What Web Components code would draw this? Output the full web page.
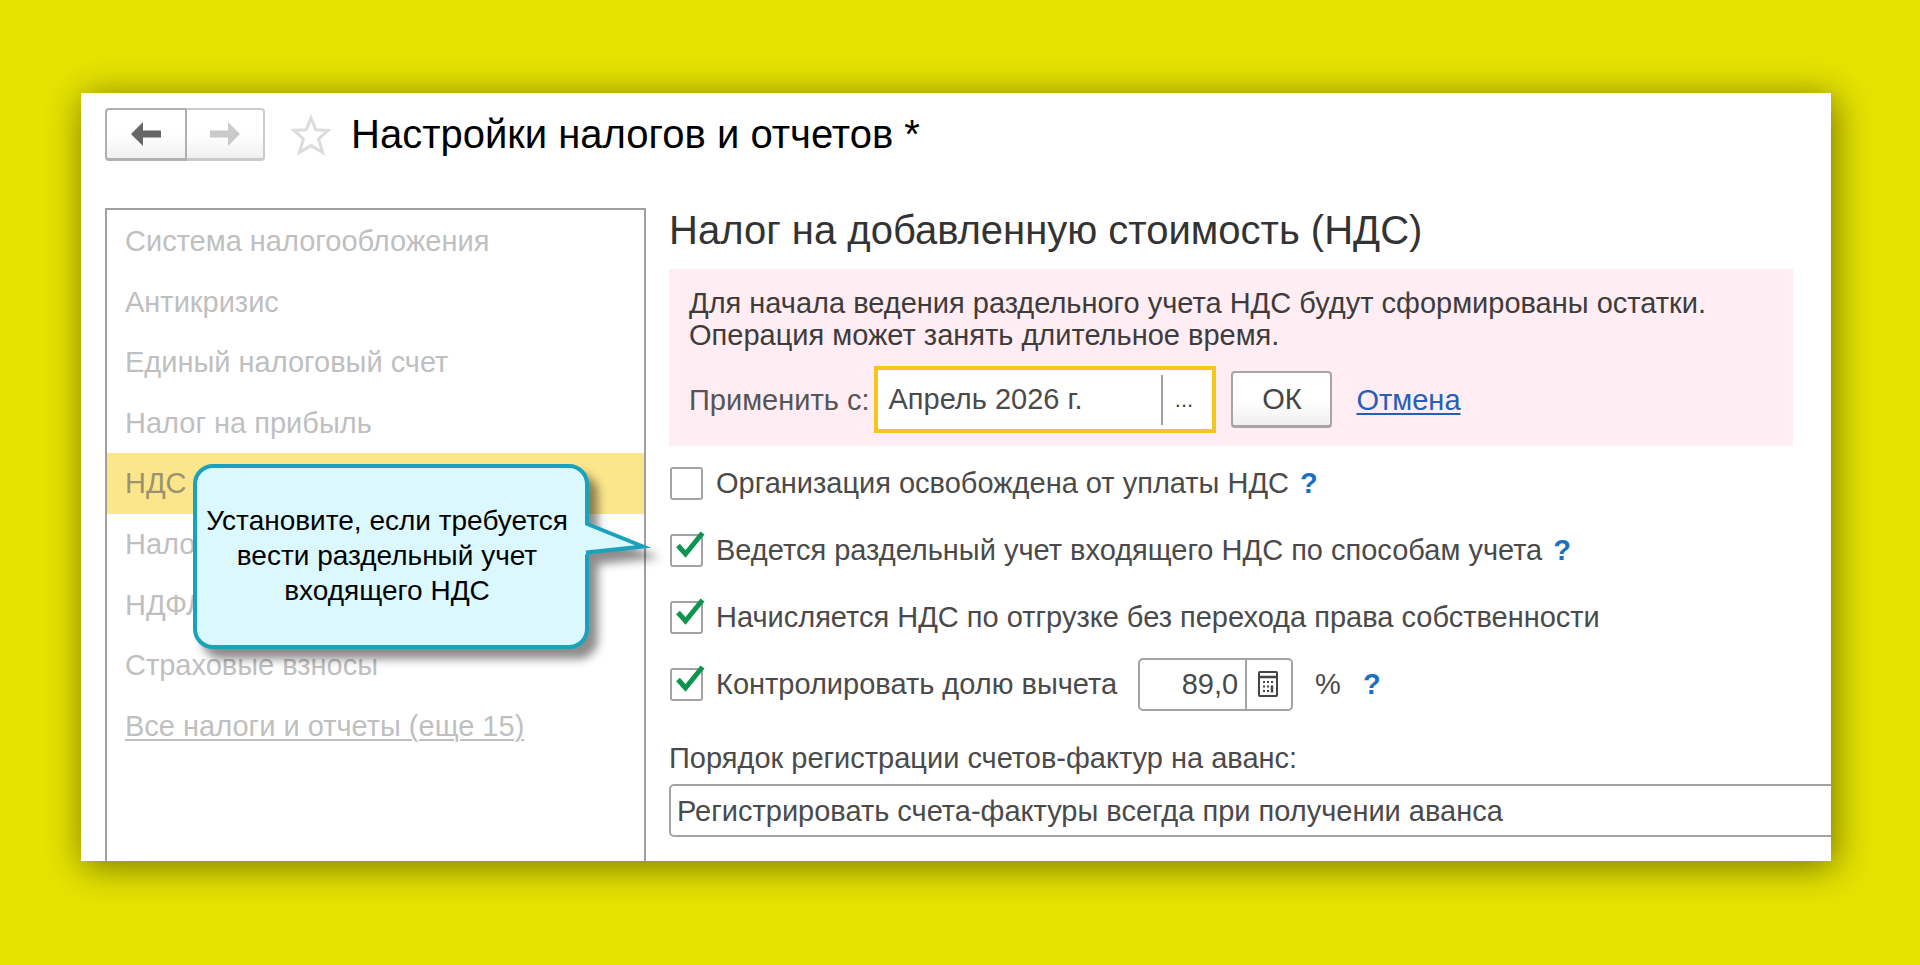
<!DOCTYPE html>
<html lang="ru">
<head>
<meta charset="utf-8">
<title>Настройки налогов и отчетов</title>
<style>
  body {
    margin: 0;
    min-height: 100vh;
    box-sizing: border-box;
    padding: 93px 89px 104px 81px;
    background: #e5e300;
    font-family: "Liberation Sans", Arial, sans-serif;
    font-size: 29px;
    line-height: 32px;
    color: #4a4a4a;
  }
</style>
</head>
<body>

<tax-window>
  <history-buttons slot="tools"></history-buttons>
  <favorite-star slot="tools"></favorite-star>
  <span slot="title">Настройки налогов и отчетов *</span>

  <section-list slot="sections">
    <section-item>Система налогообложения</section-item>
    <section-item>Антикризис</section-item>
    <section-item>Единый налоговый счет</section-item>
    <section-item>Налог на прибыль</section-item>
    <section-item selected>НДС</section-item>
    <section-item>Налог</section-item>
    <section-item>НДФЛ</section-item>
    <section-item>Страховые взносы</section-item>
    <section-item underlined>Все налоги и отчеты (еще 15)</section-item>
    <callout-note slot="note">Установите, если требуется<br>вести раздельный учет<br>входящего НДС</callout-note>
  </section-list>

  <vat-settings></vat-settings>
</tax-window>

<script>
class BaseElement extends HTMLElement {
  constructor() {
    super();
    this.attachShadow({ mode: "open" });
    this.shadowRoot.innerHTML = this.render();
  }

  render() {
    return "<slot></slot>";
  }
}

class TaxWindow extends BaseElement {
  render() {
    return `
      <style>
        :host {
          display: block;
          background: #fff;
          box-shadow: 3px 5px 34px 1px rgba(0, 0, 0, .48);
        }
        .frame { overflow: hidden; padding: 15px 0 24px 24px; }
        header { display: flex; align-items: center; margin-bottom: 47px; }
        h1 {
          margin: 0 0 2px 20px;
          font-size: 40px;
          line-height: 44px;
          font-weight: normal;
          color: #000;
        }
        .columns {
          display: grid;
          grid-template-columns: 541px 1fr;
          column-gap: 23px;
        }
        nav { margin-bottom: -24px; display: grid; }
        main { min-width: 0; }
      </style>
      <div class="frame">
        <header>
          <slot name="tools"></slot>
          <h1><slot name="title"></slot></h1>
        </header>
        <div class="columns">
          <nav><slot name="sections"></slot></nav>
          <main><slot></slot></main>
        </div>
      </div>
    `;
  }
}

class HistoryButtons extends BaseElement {
  render() {
    return `
      <style>
        :host { display: flex; margin-right: 26px; }
        button {
          display: grid;
          place-items: center;
          width: 82px;
          height: 53px;
          padding: 0;
          border: 2px solid #b0b0b0;
          border-bottom-width: 3px;
          border-radius: 4px 0 0 4px;
          background: linear-gradient(#fff 50%, #f0f0f0);
          color: #666;
        }
        button:disabled {
          width: 78px;
          border-color: #cacaca;
          border-left: 0;
          border-radius: 0 4px 4px 0;
          color: #cacaca;
        }
        svg { fill: currentColor; }
      </style>
      <button type="button" aria-label="Назад">
        <svg width="30" height="24" viewBox="0 0 30 24"><path d="M0 12 12 0v8.500h18v7H12V24z"/></svg>
      </button>
      <button type="button" aria-label="Вперед" disabled>
        <svg width="30" height="24" viewBox="0 0 30 24"><path d="M30 12 18 0v8.500H0v7h18V24z"/></svg>
      </button>
    `;
  }
}

class FavoriteStar extends BaseElement {
  render() {
    return `
      <style>
        :host { display: block; }
        button { display: block; padding: 0; border: 0; background: none; }
        svg { display: block; }
      </style>
      <button type="button" aria-label="В избранное">
        <svg width="40" height="42" viewBox="0 0 40 42" fill="none" stroke="#dcdcdc" stroke-width="3">
          <path d="M20 4 24.800 15.800 37 16.400 27.600 25 31.600 38.500 20 31.600 8.400 38.500 12.400 25 3 16.400 15.200 15.800z"/>
        </svg>
      </button>
    `;
  }
}

class SectionList extends BaseElement {
  render() {
    return `
      <style>
        :host {
          display: block;
          position: relative;
          border: 2px solid #a0a0a0;
          border-bottom: 0;
        }
        .items { display: grid; grid-auto-rows: 1fr; min-height: 545px; padding-top: 1px; }
      </style>
      <div class="items"><slot></slot></div>
      <slot name="note"></slot>
    `;
  }
}

class SectionItem extends BaseElement {
  render() {
    return `
      <style>
        :host { display: flex; align-items: center; padding: 0 18px; color: #bfbfbf; }
        :host([selected]) { background: #fbe68c; color: #9c9270; }
        a { color: inherit; text-decoration: none; }
        :host([underlined]) a {
          text-decoration: underline;
          text-decoration-thickness: 2px;
          text-underline-offset: 3px;
        }
      </style>
      <a href="#"><slot></slot></a>
    `;
  }
}

class CalloutNote extends BaseElement {
  render() {
    return `
      <style>
        :host {
          position: absolute;
          left: 86px;
          top: 254px;
          z-index: 1;
          box-sizing: border-box;
          width: 396px;
          height: 185px;
          padding: 35px 8px 0 0;
          border: 4px solid #1aa2bc;
          border-radius: 20px;
          background: #dbf8ff;
          color: #000;
          font-size: 28px;
          line-height: 35px;
          text-align: center;
          white-space: nowrap;
          filter: drop-shadow(9px 10px 5px rgba(0, 0, 0, .45));
        }
        svg { position: absolute; left: 384px; top: 52px; }
      </style>
      <slot></slot>
      <svg width="80" height="40" viewBox="0 0 80 40">
        <path d="M0 3 6 5 64 27 6 34 0 36z" fill="#dbf8ff"/>
        <path d="M5 3.500 62 26.500 5 32.500" fill="none" stroke="#1aa2bc" stroke-width="4" stroke-miterlimit="8"/>
      </svg>
    `;
  }
}

class VatSettings extends BaseElement {
  render() {
    return `
      <style>
        :host { display: block; }
        h2 {
          margin: 0 0 17px;
          font-size: 40px;
          line-height: 44px;
          font-weight: normal;
          color: #333;
        }
        .checks { display: grid; gap: 13px; margin: 10px 0 31px; }
      </style>
      <h2>Налог на добавленную стоимость (НДС)</h2>
      <apply-notice>
        Для начала ведения раздельного учета НДС будут сформированы остатки.<br>
        Операция может занять длительное время.
      </apply-notice>
      <div class="checks">
        <check-row help>Организация освобождена от уплаты НДС</check-row>
        <check-row help checked>Ведется раздельный учет входящего НДС по способам учета</check-row>
        <check-row checked>Начисляется НДС по отгрузке без перехода права собственности</check-row>
        <check-row help checked>
          Контролировать долю вычета
          <percent-field slot="extra"></percent-field>
        </check-row>
      </div>
      <invoice-order></invoice-order>
    `;
  }
}

class ApplyNotice extends BaseElement {
  render() {
    return `
      <style>
        :host {
          display: block;
          margin-right: 38px;
          padding: 18px 20px 13px;
          background: #ffedf3;
          color: #3c3c3c;
        }
        form { display: flex; align-items: center; margin-top: 15px; }
        label { color: #555; }
        .field {
          display: flex;
          align-items: center;
          box-sizing: border-box;
          width: 342px;
          height: 67px;
          margin: 0 15px 0 5px;
          border: 4px solid #f5c71c;
          background: #fff;
        }
        input {
          flex: 1;
          min-width: 0;
          height: 50px;
          box-sizing: border-box;
          padding: 0 0 0 10px;
          border: 0;
          border-right: 2px solid #a0a0a0;
          outline: 0;
          background: none;
          font: inherit;
          color: #4a4a4a;
        }
        button { font: inherit; color: #444; }
        .pick { width: 49px; padding: 0 8px 0 0; border: 0; background: none; font-size: 22px; }
        .ok {
          width: 101px;
          height: 57px;
          padding: 0;
          border: 2px solid #a8a4a6;
          border-bottom-width: 3px;
          border-radius: 4px;
          background: linear-gradient(#fff 50%, #f0f0f0);
        }
        a {
          margin-left: 24px;
          color: #2560b5;
          text-decoration-thickness: 2px;
          text-underline-offset: 3px;
        }
      </style>
      <slot></slot>
      <form>
        <label for="from">Применить с:</label>
        <div class="field">
          <input id="from" type="text" value="Апрель 2026 г.">
          <button class="pick" type="button">...</button>
        </div>
        <button class="ok" type="button">ОК</button>
        <a href="#">Отмена</a>
      </form>
    `;
  }
}

class CheckRow extends BaseElement {
  connectedCallback() {
    this.shadowRoot.querySelector("input").checked = this.hasAttribute("checked");
  }

  render() {
    return `
      <style>
        :host { display: flex; align-items: center; height: 54px; }
        .box { display: grid; margin: 0 13px 0 1px; }
        .box > * { grid-area: 1 / 1; }
        input {
          appearance: none;
          width: 33px;
          height: 33px;
          margin: 0;
          border: 2px solid #a3a3a3;
          border-radius: 3px;
          background: #fff;
        }
        svg {
          visibility: hidden;
          overflow: visible;
          pointer-events: none;
        }
        input:checked + svg { visibility: visible; }
        .help {
          display: none;
          margin-left: 11px;
          color: #1a70c0;
          font-weight: bold;
          text-decoration: none;
        }
        :host([help]) .help { display: block; }
      </style>
      <span class="box">
        <input id="check" type="checkbox">
        <svg width="33" height="33" viewBox="0 0 33 33" fill="none" stroke="#0d9550" stroke-width="5">
          <path d="M8 11.500 15.500 20 32.500 -1"/>
        </svg>
      </span>
      <label for="check"><slot></slot></label>
      <slot name="extra"></slot>
      <a class="help" href="#">?</a>
    `;
  }
}

class PercentField extends BaseElement {
  render() {
    return `
      <style>
        :host { display: flex; align-items: center; margin: 0 11px 0 21px; }
        .field {
          display: flex;
          box-sizing: border-box;
          width: 155px;
          height: 53px;
          margin-right: 22px;
          border: 2px solid #a3a3a3;
          border-radius: 5px;
        }
        input {
          flex: 1;
          min-width: 0;
          padding: 0 7px 0 0;
          border: 0;
          border-right: 2px solid #a3a3a3;
          outline: 0;
          background: none;
          font: inherit;
          color: inherit;
          text-align: right;
        }
        button {
          display: grid;
          place-items: center;
          width: 44px;
          padding: 0 2px 0 0;
          border: 0;
          background: none;
        }
      </style>
      <div class="field">
        <input id="share" type="text" value="89,0" aria-label="Доля вычета">
        <button type="button" aria-label="Калькулятор">
          <svg width="20" height="26" viewBox="0 0 20 26">
            <rect x="1" y="1" width="18" height="24" rx="1" fill="#fff" stroke="#444" stroke-width="2"/>
            <path d="M1 6h18" stroke="#444" stroke-width="2.500"/>
            <path d="M5 11h2m2 0h2m2 0h2M5 15.500h2m2 0h2M5 20h2m2 0h2" stroke="#444" stroke-width="2"/>
            <path d="M14 14.500v7" stroke="#444" stroke-width="2.500"/>
          </svg>
        </button>
      </div>
      <label for="share">%</label>
    `;
  }
}

class InvoiceOrder extends BaseElement {
  render() {
    return `
      <style>
        :host { display: block; }
        label { display: block; margin-bottom: 10px; }
        select {
          appearance: none;
          display: block;
          box-sizing: border-box;
          width: calc(100% + 40px);
          height: 53px;
          padding: 0 6px;
          border: 2px solid #a3a3a3;
          border-radius: 5px;
          background: #fff;
          font: inherit;
          color: #4a4a4a;
        }
      </style>
      <label for="order">Порядок регистрации счетов-фактур на аванс:</label>
      <select id="order">
        <option>Регистрировать счета-фактуры всегда при получении аванса</option>
      </select>
    `;
  }
}

customElements.define("tax-window", TaxWindow);
customElements.define("history-buttons", HistoryButtons);
customElements.define("favorite-star", FavoriteStar);
customElements.define("section-list", SectionList);
customElements.define("section-item", SectionItem);
customElements.define("callout-note", CalloutNote);
customElements.define("apply-notice", ApplyNotice);
customElements.define("check-row", CheckRow);
customElements.define("percent-field", PercentField);
customElements.define("invoice-order", InvoiceOrder);
customElements.define("vat-settings", VatSettings);
</script>
</body>
</html>
